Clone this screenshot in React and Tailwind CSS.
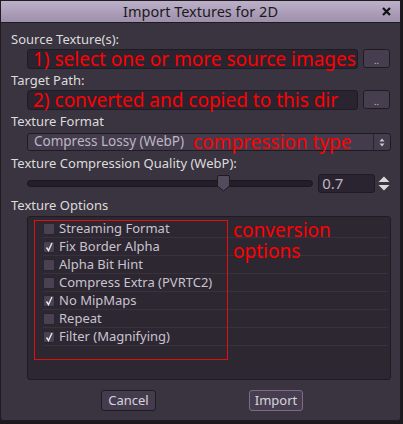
import React from "react";

const F = { fontFamily: '"Noto Sans", "DejaVu Sans", sans-serif' };

function Check({ on }) {
  return (
    <div className="w-[12px] h-[12px] rounded-[2px] bg-[#4a4252] border border-[#2a2430] flex items-center justify-center">
      {on && (
        <svg width="9" height="10" viewBox="0 0 9 10">
          <path d="M1.5 5.5 L3.5 8.5 L7 1" stroke="#e8e8e8" strokeWidth="1.4" fill="none" />
        </svg>
      )}
    </div>
  );
}

const options = [
  ["Streaming Format", false],
  ["Fix Border Alpha", true],
  ["Alpha Bit Hint", false],
  ["Compress Extra (PVRTC2)", false],
  ["No MipMaps", true],
  ["Repeat", false],
  ["Filter (Magnifying)", true],
];

export default function App() {
  return (
    <div className="w-[403px] h-[424px] bg-[#1b191d] overflow-hidden" style={F}>
      <div className="w-[401px] h-[421px] flex flex-col bg-[#3a3440] border border-[#1e1b21] rounded-b-[3px]">
        <div className="h-[22px] shrink-0 flex items-center justify-center relative bg-gradient-to-b from-[#bdb0c9] to-[#9e8fab] border-b border-[#1e1b21]">
          <span className="text-[14.5px] text-[#1a1a1a] leading-none">Import Textures for 2D</span>
          <svg className="absolute right-[9px] top-[6px]" width="9" height="9" viewBox="0 0 9 9">
            <path d="M1 1 L8 8 M8 1 L1 8" stroke="#111" strokeWidth="2.2" />
          </svg>
        </div>
        <div className="flex flex-col pl-[10px] pr-[10px] text-[13px] text-[#dcdcdc]">
          <div className="mt-[8px] h-[17px] leading-[17px]">Source Texture(s):</div>
          <div className="mt-[1px] ml-[16px] flex gap-[5px]">
            <div className="w-[331px] h-[20px] bg-[#2a2430] border border-[#1f1b23] rounded-[3px] flex items-center pl-[5px] text-[19px] text-[#ff0000] leading-none whitespace-nowrap">
              1) select one or more source images
            </div>
            <div className="w-[27px] h-[19px] bg-[#463e4f] border border-[#1f1b23] rounded-[3px] flex items-end justify-center text-[9px] text-[#ccc] pb-[2px] leading-none">..</div>
          </div>
          <div className="mt-[3px] h-[17px] leading-[17px]">Target Path:</div>
          <div className="mt-[1px] ml-[16px] flex gap-[5px]">
            <div className="w-[331px] h-[20px] bg-[#2a2430] border border-[#1f1b23] rounded-[3px] flex items-center pl-[5px] text-[19px] text-[#ff0000] leading-none whitespace-nowrap">
              2) converted and copied to this dir
            </div>
            <div className="w-[27px] h-[19px] bg-[#463e4f] border border-[#1f1b23] rounded-[3px] flex items-end justify-center text-[9px] text-[#ccc] pb-[2px] leading-none">..</div>
          </div>
          <div className="mt-[3px] h-[17px] leading-[17px]">Texture Format</div>
          <div className="mt-[3px] ml-[16px] w-[364px] h-[18px] flex bg-[#443c4c] border border-[#1f1b23] rounded-[3px]">
            <div className="flex-1 flex items-center pl-[6px] whitespace-nowrap">
              <span className="w-[159px] shrink-0 text-[13.5px] text-[#bdb6c4] leading-none">Compress Lossy (WebP)</span>
              <span className="text-[19px] text-[#ff0000] leading-none">compression type</span>
            </div>
            <div className="w-[17px] border-l border-[#2a2430] flex items-center justify-center">
              <svg width="6" height="9" viewBox="0 0 6 9">
                <path d="M3 0.5 L5.5 3.5 L0.5 3.5 Z M3 8.5 L5.5 5.5 L0.5 5.5 Z" fill="#c8c8c8" />
              </svg>
            </div>
          </div>
          <div className="mt-[4px] h-[17px] leading-[17px]">Texture Compression Quality (WebP):</div>
          <div className="mt-[2px] ml-[16px] flex items-center h-[19px]">
            <div className="relative w-[287px] h-[19px] flex items-center">
              <div className="w-full h-[7px] rounded-full bg-[#231e27] border border-[#1a161d]" />
              <svg className="absolute left-[190px] top-[1px]" width="13" height="17" viewBox="0 0 13 17">
                <path d="M2 0.5 H11 Q12.5 0.5 12.5 2 V11 L6.5 16 L0.5 11 V2 Q0.5 0.5 2 0.5 Z" fill="#544a5e" stroke="#1f1b23" />
              </svg>
            </div>
            <div className="ml-[5px] w-[57px] h-[19px] bg-[#2a2430] border border-[#1f1b23] rounded-[3px] flex items-center pl-[3px] text-[15px] text-[#bdb6c4] leading-none">0.7</div>
            <svg className="ml-[3px]" width="12" height="15" viewBox="0 0 12 15">
              <path d="M6 0.5 L11.5 6 L0.5 6 Z M6 14.5 L11.5 9 L0.5 9 Z" fill="#d8d8d8" />
            </svg>
          </div>
          <div className="mt-[4px] h-[17px] leading-[17px]">Texture Options</div>
          <div className="mt-[2px] ml-[16px] w-[364px] h-[164px] bg-[#2d2732] border border-[#1f1b23] rounded-[3px] relative">
            <div className="absolute left-[6px] top-[3px] w-[194px] h-[140px] border border-[#e01010]" />
            <div className="absolute left-[205px] top-[3px] flex flex-col text-[19px] text-[#ff0000] leading-none">
              <span className="h-[21px] flex items-center">conversion</span>
              <span className="h-[21px] flex items-center">options</span>
            </div>
            <div className="flex flex-col pt-[3px] pl-[15px] pr-[2px]">
              {options.map(([t, on]) => (
                <div key={t} className="h-[18px] flex items-center gap-[4px] border-b border-[#38323e]">
                  <Check on={on} />
                  <span className="text-[13px] text-[#c9c3cf] leading-none">{t}</span>
                </div>
              ))}
            </div>
          </div>
          <div className="mt-[10px] flex">
            <div className="ml-[90px] w-[55px] h-[21px] bg-[#443c4c] border border-[#1f1b23] rounded-[3px] flex items-center justify-center text-[13px] text-[#d8d2de] leading-none">Cancel</div>
            <div className="ml-[93px] w-[54px] h-[21px] bg-[#463e4f] border border-[#7d6a8c] rounded-[3px] flex items-center justify-center text-[13px] text-[#d8d2de] leading-none">Import</div>
          </div>
        </div>
      </div>
    </div>
  );
}
